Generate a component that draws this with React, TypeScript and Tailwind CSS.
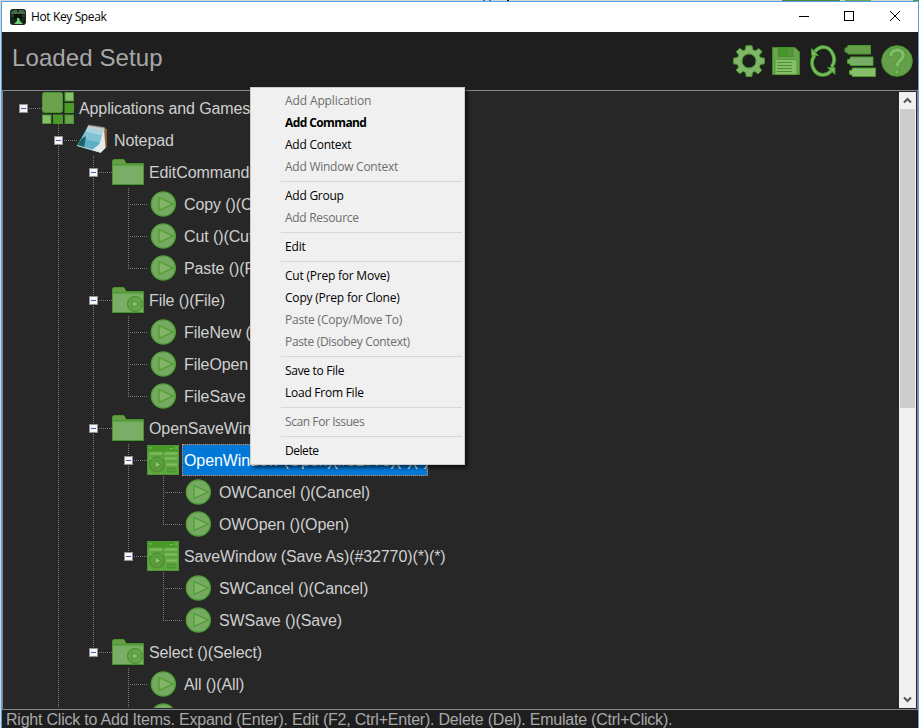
import React from "react";

type IconKind = "apps" | "notepad" | "folder" | "folderPlay" | "play" | "window";

interface TreeRow {
  guides: string;
  icon: IconKind;
  label: string;
  expanded?: boolean;
  selected?: boolean;
}

// Guide letters: "." blank, "|" pass-through, "T" branch, "L" last branch, "-" root branch
const rows: TreeRow[] = [
  { guides: "-", icon: "apps", label: "Applications and Games", expanded: true },
  { guides: ".T", icon: "notepad", label: "Notepad", expanded: true },
  { guides: ".|T", icon: "folder", label: "EditCommands", expanded: true },
  { guides: ".||T", icon: "play", label: "Copy ()(Copy)" },
  { guides: ".||T", icon: "play", label: "Cut ()(Cut)" },
  { guides: ".||L", icon: "play", label: "Paste ()(Paste)" },
  { guides: ".|T", icon: "folderPlay", label: "File ()(File)", expanded: true },
  { guides: ".||T", icon: "play", label: "FileNew ()" },
  { guides: ".||T", icon: "play", label: "FileOpen" },
  { guides: ".||L", icon: "play", label: "FileSave" },
  { guides: ".|T", icon: "folder", label: "OpenSaveWindows", expanded: true },
  { guides: ".||T", icon: "window", label: "OpenWindow (Open)(#32770)(*)(*)", expanded: true, selected: true },
  { guides: ".|||T", icon: "play", label: "OWCancel ()(Cancel)" },
  { guides: ".|||L", icon: "play", label: "OWOpen ()(Open)" },
  { guides: ".||L", icon: "window", label: "SaveWindow (Save As)(#32770)(*)(*)", expanded: true },
  { guides: ".||.T", icon: "play", label: "SWCancel ()(Cancel)" },
  { guides: ".||.L", icon: "play", label: "SWSave ()(Save)" },
  { guides: ".|L", icon: "folderPlay", label: "Select ()(Select)", expanded: true },
  { guides: ".|.T", icon: "play", label: "All ()(All)" },
  { guides: ".|.T", icon: "play", label: "" },
];

type MenuEntry = { label: string; tracking: string; disabled?: boolean; bold?: boolean };

const menuGroups: MenuEntry[][] = [
  [
    { label: "Add Application", tracking: "tracking-[-0.12px]", disabled: true },
    { label: "Add Command", tracking: "tracking-[-0.6px]", bold: true },
    { label: "Add Context", tracking: "tracking-[-0.25px]" },
    { label: "Add Window Context", tracking: "tracking-[-0.25px]", disabled: true },
  ],
  [
    { label: "Add Group", tracking: "tracking-[-0.25px]" },
    { label: "Add Resource", tracking: "tracking-[-0.3px]", disabled: true },
  ],
  [{ label: "Edit", tracking: "tracking-[-0.15px]" }],
  [
    { label: "Cut (Prep for Move)", tracking: "tracking-[-0.22px]" },
    { label: "Copy (Prep for Clone)", tracking: "tracking-[-0.2px]" },
    { label: "Paste (Copy/Move To)", tracking: "tracking-[-0.2px]", disabled: true },
    { label: "Paste (Disobey Context)", tracking: "tracking-[-0.33px]", disabled: true },
  ],
  [
    { label: "Save to File", tracking: "tracking-[-0.3px]" },
    { label: "Load From File", tracking: "tracking-[-0.25px]" },
  ],
  [{ label: "Scan For Issues", tracking: "tracking-[-0.42px]", disabled: true }],
  [{ label: "Delete", tracking: "tracking-[-0.45px]" }],
];

function TreeIcon({ kind }: { kind: IconKind }) {
  return (
    <svg width="32" height="32" viewBox="0 0 32 32" className="shrink-0">
      {kind === "apps" && (
        <g strokeWidth="1" stroke="#469a2a">
          <rect x="0.5" y="0.5" width="20" height="20" rx="2" fill="#6ca24e" />
          <rect x="23" y="0.5" width="8.5" height="8.5" fill="#87bd6b" />
          <rect x="23" y="11.5" width="8.5" height="9" fill="#4a9b27" />
          <rect x="0.5" y="23" width="8.5" height="8.5" fill="#87bd6b" />
          <rect x="11.5" y="23" width="9" height="8.5" fill="#4a9b27" />
          <rect x="23" y="23" width="8.5" height="8.5" fill="#6ca24e" />
        </g>
      )}
      {kind === "notepad" && (
        <g>
          <path d="M26.500 4L29.800 5 29.800 23 24 28z" fill="#99692f" />
          <path d="M11 2L27 5 23.500 28.500 0 21.500z" fill="#5fb0c6" />
          <path d="M11 2L27 5 26 12 8.500 8z" fill="#a8d5df" />
          <path d="M8.500 8L26 12 24.800 19 5 14.500z" fill="#82c3d3" />
          <path d="M5 14.500L9 12 7 23.500 0 21.500z" fill="#1d6070" />
          <path d="M27 5L28.500 24 24 28.500 15 26 22.500 20z" fill="#e4ebed" />
          <path d="M11 2.500L27.500 5" stroke="#c7cbcc" strokeWidth="3" />
          <path d="M11.500 1.200L27.500 3.600" stroke="#777" strokeWidth="1.500" strokeDasharray="1 1" />
          <path d="M0 21.500L24 28.500" stroke="#c9e2e8" strokeWidth="1" />
        </g>
      )}
      {(kind === "folder" || kind === "folderPlay") && (
        <g strokeWidth="1" stroke="#469528">
          <path d="M.5 9V4.500L2 3.500H12L14 7.500H31.500V12H.5z" fill="#659d48" />
          <rect x="0.5" y="9" width="31" height="19.500" fill="#7aae66" />
        </g>
      )}
      {kind === "folderPlay" && (
        <g stroke="#46952b">
          <circle cx="23" cy="20" r="7.500" fill="#6ca04d" strokeWidth="1.200" />
          <path d="M20.500 16.500L27 20 20.500 23.500z" fill="#8bc26e" />
        </g>
      )}
      {kind === "play" && (
        <g stroke="#4c9b31">
          <circle cx="16.300" cy="16" r="12.100" fill="#76aa63" strokeWidth="1.300" />
          <path d="M12 9.500L26 16 12 22.500z" fill="#81b666" strokeWidth="1.200" />
        </g>
      )}
      {kind === "window" && (
        <g>
          <rect x="0.5" y="1.500" width="31" height="29" fill="#62a845" stroke="#4a982f" />
          <rect x="1" y="2" width="30" height="5.500" fill="#4a9827" />
          <path d="M2 4h3M23 4.500h3M28 2.500l2.500 3M30.500 2.500l-2.500 3" stroke="#7cba62" strokeWidth="1" />
          <path d="M3 9.500h12M18 9.500h12M3 14.500h12M18 14.500h12M19 20.500h11" stroke="#80bb63" strokeWidth="2" />
          <path d="M2 12h28M2 17h28M16.500 8v22" stroke="#55a039" strokeWidth="1" />
          <circle cx="10" cy="20.500" r="7.500" fill="#5f9c40" stroke="#438e28" strokeWidth="1.200" />
          <path d="M8 16.500L14 20.500 8 24.500z" fill="#8bc26e" stroke="#438e28" />
          <rect x="20" y="24" width="9" height="4" rx="1.500" fill="#5b9e40" stroke="#438e28" />
        </g>
      )}
    </svg>
  );
}

const vDots = "w-px bg-[linear-gradient(#7c7c7c_50%,transparent_50%)] bg-[length:1px_2px]";
const hDots = "h-px bg-[linear-gradient(90deg,#7c7c7c_50%,transparent_50%)] bg-[length:2px_1px]";

function GuideCell({ kind, expander }: { kind: string; expander: boolean }) {
  return (
    <div className="grid h-8 w-[35px] shrink-0">
      {"|TL".includes(kind) && (
        <div className={`[grid-area:1/1] ml-[17px] ${vDots} ${kind === "L" ? "h-[17px]" : "h-8"}`} />
      )}
      {"TL-".includes(kind) && <div className={`[grid-area:1/1] ml-[17px] mt-4 w-[19px] ${hDots}`} />}
      {expander && (
        <div className="[grid-area:1/1] ml-3 mt-[11px] flex h-[11px] w-[11px] items-center justify-center bg-[#272727]">
          <div className="flex h-[9px] w-[9px] items-center justify-center border border-[#919191] bg-[#f5f5f5]">
            <div className="h-px w-[5px] bg-[#3e5fae]" />
          </div>
        </div>
      )}
    </div>
  );
}

function Row({ row }: { row: TreeRow }) {
  const last = row.guides.length - 1;
  return (
    <div className="flex h-8 shrink-0 items-center pl-[2px]">
      {row.guides.split("").map((g, i) => (
        <GuideCell key={i} kind={g} expander={!!row.expanded && i === last} />
      ))}
      <div className="ml-px flex">
        <TreeIcon kind={row.icon} />
      </div>
      <div
        className={
          row.selected
            ? "ml-[3px] h-8 w-[246px] border border-dotted border-[#ff8728] bg-[#0078d7] pl-px leading-8 text-white"
            : "ml-[5px] h-8 leading-[34px]"
        }
      >
        {row.label}
      </div>
    </div>
  );
}

function ContextMenu() {
  return (
    <div className="absolute left-[250px] top-[87px] w-[215px] border border-[#cccccc] bg-[#f0f0f0] py-[2px] font-['Open_Sans','Noto_Sans',sans-serif] text-[12px] text-black shadow-[3px_3px_3px_rgba(0,0,0,0.55)]">
      {menuGroups.map((group, gi) => (
        <React.Fragment key={gi}>
          {gi > 0 && <div className="my-[3px] ml-[30px] mr-[2px] h-px bg-[#d7d7d7]" />}
          {group.map((m) => (
            <div
              key={m.label}
              className={`h-[22px] whitespace-nowrap pl-[34px] leading-[22px] ${m.tracking} ${m.disabled ? "text-[#6d6d6d]" : ""} ${m.bold ? "font-bold" : ""}`}
            >
              {m.label}
            </div>
          ))}
        </React.Fragment>
      ))}
    </div>
  );
}

function Toolbar() {
  return (
    <div className="flex gap-[5px]">
      <svg width="32" height="32" viewBox="0 0 32 32">
        <path
          fillRule="evenodd"
          d="M13 .7h6l.8 4 2.700 1.100L26 3.500 29 6.800 26.300 10.200 27.400 12.600 31.400 13.200V18.800L27.400 19.500 26.300 22 28.700 25.300 25 29 21.900 26.400 19.500 27.500 18.800 31.500H13.200L12.500 27.500 10 26.400 6.700 28.800 3.200 25.200 5.600 22 4.500 19.500.6 18.800V13.200L4.500 12.500 5.700 10 3.200 6.700 6.800 3.300 10 5.700 12.300 4.700zM16 9a7 7 0 1 0 0 14 7 7 0 0 0 0-14z"
          fill="#80b669"
          stroke="#469b27"
          strokeWidth="1"
        />
      </svg>
      <svg width="32" height="32" viewBox="0 0 32 32">
        <path d="M2.500 2.500H25L29.500 7V29.500H2.500z" fill="#6aa34f" stroke="#3d8d21" />
        <rect x="8.500" y="3" width="14.500" height="8.500" fill="#57963d" stroke="#488d2b" />
        <rect x="9" y="3" width="9" height="8" fill="#46962a" />
        <rect x="5" y="14.500" width="22" height="15" fill="#87bd6b" stroke="#529d35" />
        <path d="M7 17.500h15M7 20.500h15M7 23.500h15M7 26.500h15" stroke="#4c9330" strokeWidth="1" />
      </svg>
      <svg width="32" height="32" viewBox="0 0 32 32" fill="none">
        <g stroke="#3c9420" strokeWidth="4">
          <path d="M8 6.500C13 .5 21 .5 25 7.500 28 12 28 18 24.500 22" />
          <path d="M7.500 10.500C4 15 4.500 21 7.500 25.500 11.500 31 19 31.500 24 26" />
        </g>
        <path d="M4.500 3.500V10.500H11.500zM20.500 22.500H28V29.500z" fill="#79b963" stroke="#3c9420" />
        <g stroke="#79b963" strokeWidth="2.400">
          <path d="M8 6.500C13 .5 21 .5 25 7.500 28 12 28 18 24.500 22" />
          <path d="M7.500 10.500C4 15 4.500 21 7.500 25.500 11.500 31 19 31.500 24 26" />
        </g>
      </svg>
      <svg width="32" height="32" viewBox="0 0 32 32" stroke="#479a2b">
        <path d="M1 3h2l1-2.500H26.500V9H4L3 7H1z" fill="#659d48" />
        <path d="M3.500 14.500h2L6.500 12H29v8.500H6.500L5.500 18.500h-2z" fill="#78ad65" />
        <path d="M5.500 25.500h2L8.500 23H31.500v8.500H8.500L7.500 29.500h-2z" fill="#87bd6b" />
      </svg>
      <svg width="32" height="32" viewBox="0 0 32 32" fill="none">
        <circle cx="16" cy="16" r="15.300" fill="#659f49" stroke="#499a2c" strokeWidth="1" />
        <path d="M9.800 11.500C9.500 2.500 23 2.500 22 11 21.500 15 16 16 16 22" stroke="#469a2b" strokeWidth="5" />
        <path d="M9.800 11C9.500 3 23 3 22 11 21.500 15 16 16 16 21.500" stroke="#82b96b" strokeWidth="3.500" />
        <circle cx="16" cy="27" r="2.200" fill="#82b96b" stroke="#469a2b" />
      </svg>
    </div>
  );
}

function TitleBar() {
  return (
    <div className="flex h-[30px] shrink-0 items-center bg-white pl-2">
      <svg width="16" height="16" viewBox="0 0 16 16">
        <rect width="16" height="16" rx="3" fill="#17261a" />
        <path d="M1 3l3-2h3v2h2V1h4l2 2v2H1z" fill="#476a4a" />
        <path d="M4 5h8v5H4z" fill="#0b120c" />
        <path d="M1 7h3M12 7h3" stroke="#365d39" />
        <path d="M7 9h2l1 3 3 3H4l3-3z" fill="#6fcd77" />
      </svg>
      <span className="ml-[5px] flex-1 font-['Open_Sans','Noto_Sans',sans-serif] text-[12px] leading-4 tracking-[-0.38px] text-black">
        Hot Key Speak
      </span>
      <svg width="138" height="30" viewBox="0 0 138 30" fill="none" stroke="#000" shapeRendering="crispEdges">
        <path d="M19 14.500h10" />
        <rect x="64.500" y="9.500" width="9" height="9" />
        <path d="M110 9l10 10M120 9l-10 10" shapeRendering="auto" />
      </svg>
    </div>
  );
}

function ScrollBar() {
  return (
    <div className="flex w-[17px] shrink-0 flex-col bg-[#f0f0f0]">
      <div className="flex h-[17px] items-center justify-center">
        <svg width="9" height="7" viewBox="0 0 9 7" fill="none">
          <path d="M1 5.500L4.500 2 8 5.500" stroke="#555" strokeWidth="2" />
        </svg>
      </div>
      <div className="mx-px h-[299px] bg-[#cdcdcd]" />
      <div className="flex-1" />
      <div className="flex h-[17px] items-center justify-center">
        <svg width="9" height="7" viewBox="0 0 9 7" fill="none">
          <path d="M1 1.500L4.500 5 8 1.500" stroke="#555" strokeWidth="2" />
        </svg>
      </div>
    </div>
  );
}

export default function App() {
  return (
    <div className="relative flex h-[728px] w-[919px] flex-col overflow-hidden bg-[#d6d6d6] font-['Liberation_Sans',Arial,sans-serif]">
      <div className="flex h-px shrink-0">
        <div className="ml-[483px] h-px w-[2px] bg-[#2a78a8]" />
        <div className="ml-1 h-px w-[2px] bg-[#2a78a8]" />
        <div className="ml-4 h-px w-[2px] bg-[#201810]" />
        <div className="ml-[273px] h-px w-[58px] bg-[#4d8a35]" />
        <div className="ml-[5px] h-px w-[26px] bg-[#6ba350]" />
        <div className="ml-[42px] h-px w-[6px] bg-[#5a9440]" />
      </div>
      <div className="ml-px flex min-h-0 flex-1 flex-col border-x border-t border-[#559fe4] bg-[#1e1e1e]">
        <TitleBar />
        <div className="flex h-[58px] shrink-0 items-center justify-between pl-[10px] pr-[5px]">
          <h1 className="-mt-[6px] text-[24px] leading-7 tracking-[0.1px] text-[#a8a8a8]">Loaded Setup</h1>
          <Toolbar />
        </div>
        <div className="flex h-[620px] shrink-0 border border-[#828790] bg-[#272727] p-px">
          <div className="flex min-w-0 flex-1 flex-col overflow-hidden whitespace-nowrap text-[16px] tracking-[-0.1px] text-[#cfcfcf]">
            {rows.map((row, i) => (
              <Row key={i} row={row} />
            ))}
          </div>
          <ScrollBar />
        </div>
        <div className="h-[18px] whitespace-nowrap pl-1 text-[16px] leading-[19px] tracking-[-0.22px] text-[#a8a8a8]">
          Right Click to Add Items. Expand (Enter). Edit (F2, Ctrl+Enter). Delete (Del). Emulate (Ctrl+Click).
        </div>
      </div>
      <ContextMenu />
    </div>
  );
}
